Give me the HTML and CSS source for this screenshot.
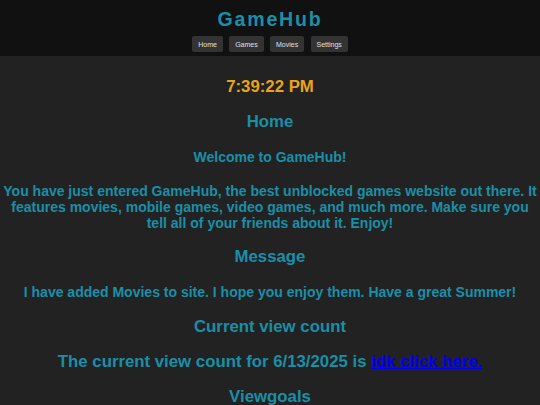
FILE: index.html
```html
<!DOCTYPE html>
<html>
<head>
<meta charset="utf-8">
<link rel="stylesheet" href="styles.css">
</head>
<body>
<header class="top">
  <h1 class="brand">GameHub</h1>
  <nav class="nav">
    <button class="nav-btn">Home</button>
    <button class="nav-btn">Games</button>
    <button class="nav-btn">Movies</button>
    <button class="nav-btn">Settings</button>
  </nav>
</header>
<main class="content">
  <div class="clock">7:39:22 PM</div>
  <h2 class="heading">Home</h2>
  <h3 class="sub">Welcome to GameHub!</h3>
  <p class="text">You have just entered GameHub, the best unblocked games website out there. It features movies, mobile games, video games, and much more. Make sure you tell all of your friends about it. Enjoy!</p>
  <h2 class="heading">Message</h2>
  <p class="sub">I have added Movies to site. I hope you enjoy them. Have a great Summer!</p>
  <h2 class="heading">Current view count</h2>
  <p class="heading">The current view count for 6/13/2025 is <a class="link" href="#">idk click here.</a></p>
  <h2 class="heading">Viewgoals</h2>
</main>
</body>
</html>
```
FILE: styles.css
```css
html, body {
  margin: 0;
  padding: 0;
  background: #222222;
  font-family: "Liberation Sans", Arial, sans-serif;
  overflow: hidden;
}
.top {
  background: #111111;
  padding: 7px 0 4px;
  display: flex;
  flex-direction: column;
  align-items: center;
  gap: 5px;
}
.brand {
  margin: 0;
  font-size: 19.6px;
  line-height: 24px;
  letter-spacing: 1.75px;
  color: #1a8fa8;
  font-weight: bold;
}
.nav {
  display: flex;
  gap: 6.3px;
}
.nav-btn {
  font-family: "Liberation Sans", Arial, sans-serif;
  font-size: 7px;
  height: 16px;
  padding: 0 6px;
  border: none;
  border-radius: 2px;
  background: #333333;
  color: #e0e0e0;
}
.content {
  padding-top: 21px;
  display: flex;
  flex-direction: column;
  gap: 15px;
  text-align: center;
  color: #1a8fa8;
  font-weight: bold;
}
.clock {
  font-size: 16.8px;
  line-height: 20px;
  color: #e9a31b;
}
.heading {
  margin: 0;
  font-size: 16.8px;
  line-height: 20px;
  font-weight: bold;
}
.sub {
  margin: 0;
  font-size: 14px;
  line-height: 20px;
  font-weight: bold;
}
.text {
  margin: 1px 0;
  font-size: 14px;
  line-height: 16px;
}
.link {
  color: #0000ee;
  text-decoration: underline;
}
```
